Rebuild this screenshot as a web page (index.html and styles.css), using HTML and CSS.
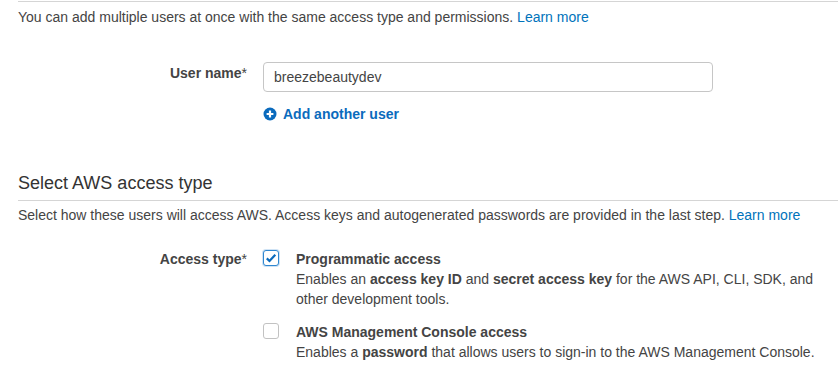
FILE: index.html
```html
<!DOCTYPE html>
<html lang="en">
<head>
  <meta charset="UTF-8" />
  <meta name="viewport" content="width=device-width, initial-scale=1" />
  <title>Add user</title>
  <link rel="stylesheet" href="styles.css">
</head>
<body>
  <div class="page">
    <p class="intro">You can add multiple users at once with the same access type and permissions. <a href="#">Learn more</a></p>

    <div class="form-row user-row">
      <label class="form-label" for="userName">User name<span class="req">*</span></label>
      <div class="form-field">
        <input id="userName" class="text-input" type="text" value="breezebeautydev" />
        <a href="#" class="add-link">
          <svg class="plus-icon" viewBox="0 0 14 14" width="14" height="14" aria-hidden="true">
            <circle cx="7" cy="7" r="6.5" fill="#0b6bbd" />
            <path d="M7 3.6v6.8M3.6 7h6.8" stroke="#fff" stroke-width="2.2" stroke-linecap="butt" />
          </svg>
          Add another user
        </a>
      </div>
    </div>

    <h2 class="section-title">Select AWS access type</h2>
    <p class="section-desc">Select how these users will access AWS. Access keys and autogenerated passwords are provided in the last step. <a href="#">Learn more</a></p>

    <div class="form-row access-row">
      <div class="form-label">Access type<span class="req">*</span></div>
      <div class="form-field">
        <div class="option">
          <span class="checkbox checked">
            <svg viewBox="0 0 12 12" width="12" height="12" aria-hidden="true">
              <path d="M1.8 6.4l2.7 2.6L10.3 2.8" fill="none" stroke="#0b6bbd" stroke-width="2.2" />
            </svg>
          </span>
          <div class="option-text">
            <div class="option-title">Programmatic access</div>
            <div class="option-desc">Enables an <b>access key ID</b> and <b>secret access key</b> for the AWS API, CLI, SDK, and other development tools.</div>
          </div>
        </div>
        <div class="option">
          <span class="checkbox"></span>
          <div class="option-text">
            <div class="option-title">AWS Management Console access</div>
            <div class="option-desc">Enables a <b>password</b> that allows users to sign-in to the AWS Management Console.</div>
          </div>
        </div>
      </div>
    </div>
  </div>
</body>
</html>
```

FILE: styles.css
```css
* {
  box-sizing: border-box;
  margin: 0;
  padding: 0;
}
body {
  background: #fff;
  color: #444;
  font-family: "Liberation Sans", Arial, sans-serif;
  font-size: 14px;
  line-height: 20px;
}
a {
  color: #0073bb;
  text-decoration: none;
}

.page {
  padding-left: 18px;
}

/* ───── Intro ───── */
.intro {
  margin-top: 1px;
  border-top: 1px solid #d5d5d5;
  padding-top: 5px;
}

/* ───── Form rows ───── */
.form-row {
  display: grid;
  grid-template-columns: 229px 1fr;
  column-gap: 16px;
}
.form-label {
  text-align: right;
  font-weight: bold;
  color: #444;
}
.req { font-weight: normal; }

.user-row { margin-top: 35px; }
.user-row .form-label { padding-top: 1px; }

.text-input {
  display: block;
  width: 450px;
  height: 30px;
  padding: 0 10px;
  border: 1px solid #c6c6c6;
  border-radius: 4px;
  font: inherit;
  color: #444;
  outline: none;
}

.add-link {
  display: inline-flex;
  align-items: center;
  gap: 6px;
  margin-top: 12px;
  font-weight: bold;
  color: #0b6bbd;
}
.plus-icon { flex: none; }

/* ───── Access type section ───── */
.section-title {
  margin-top: 45px;
  padding-bottom: 5px;
  border-bottom: 1px solid #d5d5d5;
  font-size: 18px;
  line-height: 24px;
  font-weight: normal;
  color: #333;
}
.section-desc { margin-top: 4px; }

.access-row { margin-top: 24px; }

.option {
  display: flex;
  gap: 17px;
}
.option + .option { margin-top: 13px; }

.checkbox {
  flex: none;
  width: 16px;
  height: 16px;
  margin-top: 1px;
  border: 1px solid #c2c2c2;
  border-radius: 3px;
  background: #fff;
  display: flex;
  align-items: center;
  justify-content: center;
}
.checkbox.checked {
  border-color: #2f87d0;
  box-shadow: 0 0 0 1px #cfe3f5;
}

.option-text { max-width: 530px; }
.option-title {
  font-weight: bold;
  color: #444;
}
.option-desc b { color: #444; }
```
